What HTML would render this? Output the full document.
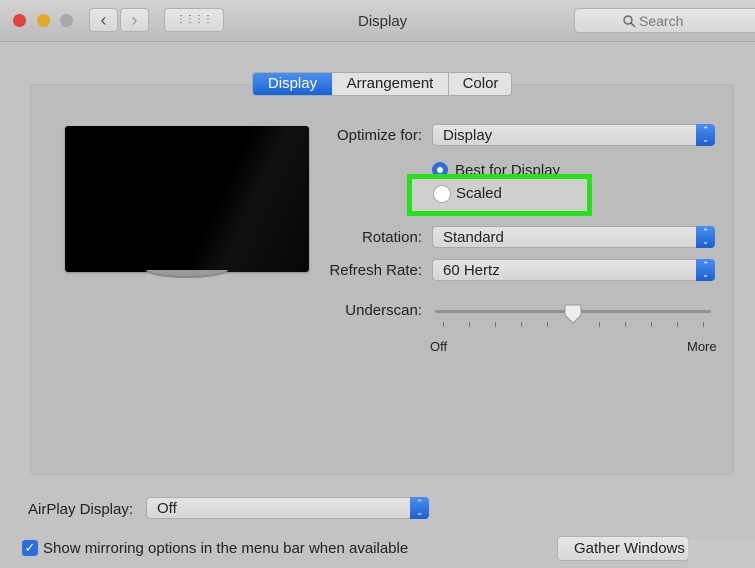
<!DOCTYPE html>
<html><head><style>
*{margin:0;padding:0;box-sizing:border-box}
body{width:755px;height:568px;overflow:hidden;background:#c3c3c3;font-family:"Liberation Sans",sans-serif;color:#222;position:relative;font-size:14px}
.a{position:absolute}
.tb{left:0;top:0;width:755px;height:42px;background:linear-gradient(#d2d2d2,#bcbcbc);border-bottom:1px solid #a9a9a9}
.dot{width:13px;height:13px;border-radius:50%;top:14px}
.btn{background:linear-gradient(#e6e6e6,#d8d8d8);border:1px solid #b0b0b0;border-radius:4px}
.pop{height:22px;background:linear-gradient(#e4e4e4,#d6d6d6);border:1px solid #aaa;border-radius:4px;font-size:15px;padding:2px 10px;color:#222}
.pop .ar{position:absolute;right:-1px;top:-1px;width:19px;height:22px;background:linear-gradient(#4a8ff0,#1c5fd0);border-radius:0 4px 4px 0;color:#fff;font-size:9px;line-height:9px;text-align:center;padding-top:2px}
.lbl{font-size:15px;text-align:right}
.tick{width:1px;height:5px;background:#777;top:322px}
</style></head><body>
<div class="a tb"></div>
<div class="a dot" style="left:13px;background:#e0443e"></div>
<div class="a dot" style="left:37px;background:#e0a82b"></div>
<div class="a dot" style="left:60px;background:#a9a9a9"></div>
<div class="a btn" style="left:89px;top:8px;width:29px;height:24px;font-size:18px;text-align:center;line-height:22px;color:#555">&#8249;</div>
<div class="a btn" style="left:120px;top:8px;width:29px;height:24px;font-size:18px;text-align:center;line-height:22px;color:#999">&#8250;</div>
<div class="a btn" style="left:164px;top:8px;width:60px;height:24px;text-align:center;font-size:10px;line-height:22px;color:#555;letter-spacing:-1px">&#8942;&#8942;&#8942;&#8942;</div>
<div class="a" style="left:358px;top:13px;font-size:15px;color:#333">Display</div>
<div class="a btn" style="left:574px;top:8px;width:190px;height:25px;border-radius:5px;color:#777;font-size:14px;padding:4px 0 0 47px">
<svg width="13" height="13" style="position:absolute;left:48px;top:6px"><circle cx="5" cy="5" r="4" fill="none" stroke="#666" stroke-width="1.4"/><path d="M8 8 12 12" stroke="#666" stroke-width="1.5"/></svg><span style="margin-left:17px">Search</span></div>

<div class="a" style="left:30px;top:84px;width:704px;height:391px;background:#bcbcbc;border:1px solid #b4b4b4;border-radius:4px"></div>
<div class="a" style="left:252px;top:72px;width:260px;height:24px;background:#e2e2e2;border:1px solid #aaa;border-radius:4px;font-size:15px">
<div class="a" style="left:0;top:0;width:79px;height:22px;background:linear-gradient(#4a8ff0,#1a62d6);color:#fff;border-radius:3px 0 0 3px;text-align:center;line-height:22px">Display</div>
<div class="a" style="left:79px;top:0;width:117px;height:22px;text-align:center;line-height:22px;border-right:1px solid #b0b0b0">Arrangement</div>
<div class="a" style="left:196px;top:0;width:63px;height:22px;text-align:center;line-height:22px">Color</div>
</div>

<div class="a" style="left:65px;top:126px;width:244px;height:146px;background:linear-gradient(115deg,#000 60%,#111 72%,#060606);border-radius:3px;box-shadow:0 1px 2px #888"></div>
<div class="a" style="left:146px;top:270px;width:82px;height:8px;border:2px solid #888;border-top:none;border-radius:0 0 40px 40px/0 0 8px 8px;background:#999"></div>

<div class="a lbl" style="left:300px;top:127px;width:122px">Optimize for:</div>
<div class="a pop" style="left:432px;top:124px;width:283px">Display<div class="ar">&#8963;<br>&#8964;</div></div>
<div class="a" style="left:432px;top:162px;width:16px;height:16px;border-radius:50%;background:#2a6fe0"><div class="a" style="left:5px;top:5px;width:6px;height:6px;border-radius:50%;background:#fff"></div></div>
<div class="a" style="left:455px;top:162px;font-size:15px">Best for Display</div>
<div class="a" style="left:407px;top:174px;width:185px;height:42px;border:5px solid #27e21a;background:#cfcfcf"></div>
<div class="a" style="left:433px;top:185px;width:18px;height:18px;border-radius:50%;background:#fff;border:1px solid #aaa"></div>
<div class="a" style="left:456px;top:185px;font-size:15px">Scaled</div>

<div class="a lbl" style="left:300px;top:229px;width:122px">Rotation:</div>
<div class="a pop" style="left:432px;top:226px;width:283px">Standard<div class="ar">&#8963;<br>&#8964;</div></div>
<div class="a lbl" style="left:300px;top:262px;width:122px">Refresh Rate:</div>
<div class="a pop" style="left:432px;top:259px;width:283px">60 Hertz<div class="ar">&#8963;<br>&#8964;</div></div>
<div class="a lbl" style="left:300px;top:302px;width:122px">Underscan:</div>
<div class="a" style="left:435px;top:310px;width:276px;height:3px;background:#909090;border-radius:2px"></div>
<svg class="a" style="left:563px;top:303px" width="20" height="22"><path d="M2 2h16v10l-8 8-8-8z" fill="#eee" stroke="#999"/></svg>
<div class="a tick" style="left:443px"></div><div class="a tick" style="left:469px"></div><div class="a tick" style="left:495px"></div><div class="a tick" style="left:521px"></div><div class="a tick" style="left:547px"></div><div class="a tick" style="left:599px"></div><div class="a tick" style="left:625px"></div><div class="a tick" style="left:651px"></div><div class="a tick" style="left:677px"></div><div class="a tick" style="left:703px"></div>
<div class="a" style="left:430px;top:339px;font-size:13px">Off</div>
<div class="a" style="left:687px;top:339px;font-size:13px">More</div>

<div class="a" style="left:28px;top:501px;font-size:15px">AirPlay Display:</div>
<div class="a pop" style="left:146px;top:497px;width:283px">Off<div class="ar">&#8963;<br>&#8964;</div></div>
<div class="a" style="left:22px;top:540px;width:16px;height:16px;border-radius:3px;background:#2a6fe0;color:#fff;font-size:13px;text-align:center;line-height:16px">&#10003;</div>
<div class="a" style="left:43px;top:540px;font-size:15px">Show mirroring options in the menu bar when available</div>
<div class="a btn" style="left:557px;top:536px;width:132px;height:25px;font-size:15px;padding:3px 0 0 16px">Gather Windows</div>
<div class="a" style="left:688px;top:540px;width:67px;height:28px;background:#c8c8c8"></div>
</body></html>
